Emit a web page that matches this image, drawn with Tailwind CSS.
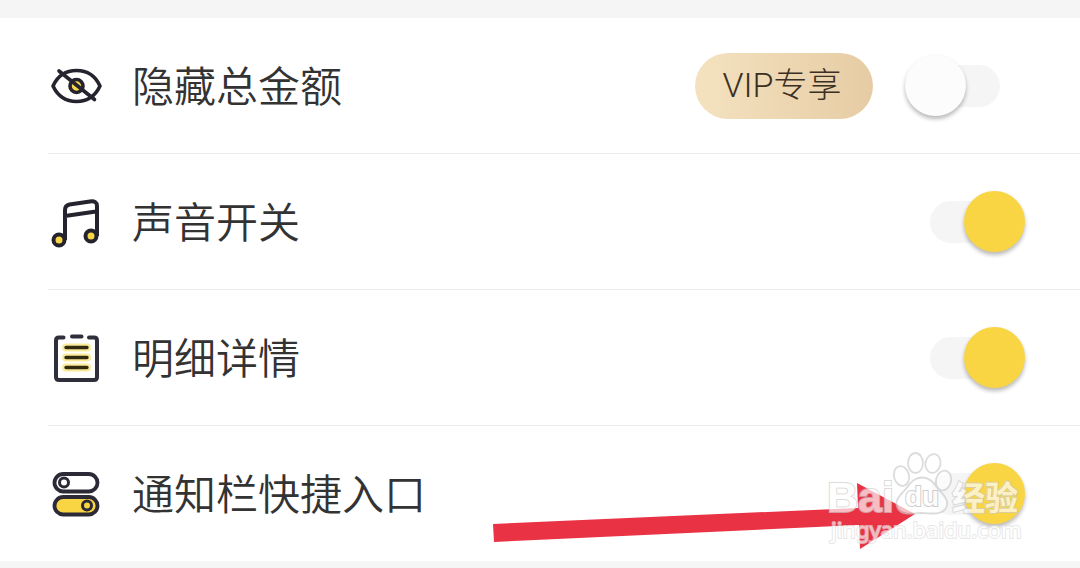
<!DOCTYPE html>
<html lang="zh-CN">
<head>
<meta charset="utf-8">
<meta name="viewport" content="width=device-width, initial-scale=1">
<title>设置</title>
<script src="https://cdn.jsdelivr.net/npm/@tailwindcss/browser@4"></script>
</head>
<body class="bg-[#f5f5f5] font-['Noto_Sans_CJK_SC',sans-serif] text-[#333333]">
<main class="relative py-[18px] pb-[7px]">
  <ul class="bg-white pl-12">
    <li class="flex h-34 items-center border-b border-[#ececec] pr-20">
      <svg class="mr-7 size-14 shrink-0" viewBox="0 0 56 56" fill="none" stroke="#25242e" stroke-width="3.6" stroke-linecap="round" aria-hidden="true">
        <path d="M5 28C10 17 19 12.500 28.500 12.500S47 17 52 28C47 38.500 38 43.500 28.500 43.500S10 38.500 5 28Z" stroke-linejoin="round"/>
        <circle cx="28.500" cy="28" r="6.500" fill="#f9d648"/>
        <path d="M11 13L46.500 41.500"/>
      </svg>
      <label for="hide" class="grow pb-1 text-[42px] leading-15 font-[350]">隐藏总金额</label>
      <span class="mr-[57px] flex h-[66px] w-[178px] items-center justify-center rounded-full bg-linear-to-r from-[#f4e2bf] to-[#e6cca5] pr-1 pb-0.5 font-[Roboto,'Noto_Sans_CJK_SC',sans-serif] text-[34px] leading-10 font-light text-[#3b3023]">VIP专享</span>
      <input id="hide" type="checkbox" role="switch" class="relative h-[42px] w-[70px] shrink-0 appearance-none rounded-full bg-[#f5f5f5] before:absolute before:-top-2.5 before:left-[-25px] before:size-[61px] before:rounded-full before:bg-[#fcfcfc] before:shadow-[0_3px_4px_rgba(0,0,0,0.28)] checked:before:left-[34px] checked:before:bg-[#f9d544]">
    </li>
    <li class="flex h-34 items-center border-b border-[#ececec] pr-20">
      <svg class="mr-7 size-14 shrink-0" viewBox="0 0 56 56" fill="none" stroke="#25242e" stroke-width="4" aria-hidden="true">
        <path d="M17 46V16Q17 11.500 21.500 10.500L42 7.500Q49 6.500 49 12V42M17 22L48 17.500"/>
        <circle cx="11" cy="46" r="5.500" fill="#f9d648"/>
        <circle cx="43" cy="42" r="5.500" fill="#f9d648"/>
      </svg>
      <label for="sound" class="grow pb-1 text-[42px] leading-15 font-[350]">声音开关</label>
      <input id="sound" type="checkbox" role="switch" checked class="relative h-[42px] w-[70px] shrink-0 appearance-none rounded-full bg-[#f5f5f5] before:absolute before:-top-2.5 before:left-[-25px] before:size-[61px] before:rounded-full before:bg-[#fcfcfc] before:shadow-[0_3px_4px_rgba(0,0,0,0.28)] checked:before:left-[34px] checked:before:bg-[#f9d544]">
    </li>
    <li class="flex h-34 items-center border-b border-[#ececec] pr-20">
      <svg class="mr-7 size-14 shrink-0" viewBox="0 0 56 56" fill="none" stroke="#2f2e3b" stroke-width="4" stroke-linecap="round" stroke-linejoin="round" aria-hidden="true">
        <path d="M15.500 7.500H11Q8 7.500 8 10.500V47Q8 50 11 50H46Q49 50 49 47V10.500Q49 7.500 46 7.500H41M24 6.500H33.500"/>
        <path d="M18 17.500H39M18 27.500H39M18 37.500H39" stroke="#faeb9b" stroke-width="8"/>
        <path d="M18 17.500H39M18 27.500H39M18 37.500H39" stroke="#332b10" stroke-width="3.400"/>
      </svg>
      <label for="detail" class="grow pb-1 text-[42px] leading-15 font-[350]">明细详情</label>
      <input id="detail" type="checkbox" role="switch" checked class="relative h-[42px] w-[70px] shrink-0 appearance-none rounded-full bg-[#f5f5f5] before:absolute before:-top-2.5 before:left-[-25px] before:size-[61px] before:rounded-full before:bg-[#fcfcfc] before:shadow-[0_3px_4px_rgba(0,0,0,0.28)] checked:before:left-[34px] checked:before:bg-[#f9d544]">
    </li>
    <li class="flex h-[135px] items-center pr-20">
      <svg class="mr-7 size-14 shrink-0" viewBox="0 0 56 56" fill="none" stroke="#2b2a36" stroke-width="3.800" aria-hidden="true">
        <rect x="6.500" y="8" width="43" height="17.500" rx="8.700"/>
        <circle cx="16" cy="16.500" r="4.500" stroke-width="3"/>
        <rect x="6.500" y="31" width="43" height="17.500" rx="8.700" fill="#f9d544"/>
        <circle cx="39" cy="39.500" r="4.500" stroke-width="3"/>
      </svg>
      <label for="notice" class="grow pb-1 text-[42px] leading-15 font-[350]">通知栏快捷入口</label>
      <input id="notice" type="checkbox" role="switch" checked class="relative h-[42px] w-[70px] shrink-0 appearance-none rounded-full bg-[#f5f5f5] before:absolute before:-top-2.5 before:left-[-25px] before:size-[61px] before:rounded-full before:bg-[#fcfcfc] before:shadow-[0_3px_4px_rgba(0,0,0,0.28)] checked:before:left-[34px] checked:before:bg-[#f9d544]">
    </li>
  </ul>
  <!-- Arrow and watermark above the last row -->
  <svg class="pointer-events-none absolute right-0 bottom-0 h-[128px] w-[600px]" viewBox="480 440 600 128">
    <path d="M493 524L858 508L857 483L915 514L860 549L859 525L494 542Z" fill="#e93345"/>
    <g opacity="0.68" fill="#ffffff" stroke="#cccccc" stroke-width="1.800">
      <ellipse cx="901.500" cy="476" rx="7.500" ry="10" transform="rotate(-15 901.500 476)"/>
      <ellipse cx="915.500" cy="463" rx="7.500" ry="10"/>
      <ellipse cx="933" cy="463.500" rx="7.500" ry="9.500" transform="rotate(12 933 463.500)"/>
      <ellipse cx="943.500" cy="480.500" rx="7.500" ry="10" transform="rotate(15 943.500 480.500)"/>
      <path d="M922 477.500C931 477.500 935 485 939 490C946 497 949 502 946 508C941 516 931 513 922 513S903 516 898 509C894 502 898 497 904 491C909 486 912 477.500 922 477.500Z"/>
      <g paint-order="stroke" stroke-width="2" font-weight="700">
        <text x="827" y="512" font-family="Liberation Sans" font-size="43">Bai</text>
        <text x="905" y="506" font-family="Liberation Sans" font-size="28" stroke="#b8b8b8">du</text>
        <text x="952" y="510" font-family="Noto Sans CJK SC" font-size="33">经验</text>
        <text x="831" y="538" font-family="Noto Sans" font-size="22" font-weight="400" stroke="#dddddd">jingyan.baidu.com</text>
      </g>
    </g>
  </svg>
</main>
</body>
</html>
